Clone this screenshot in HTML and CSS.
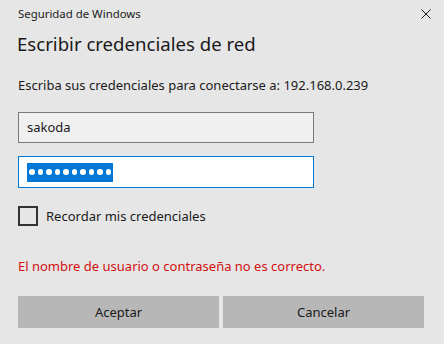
FILE: index.html
```html
<!DOCTYPE html>
<html lang="es">
<head>
    <meta charset="UTF-8">
    <title>Seguridad de Windows</title>
    <link rel="stylesheet" href="styles.css">
</head>
<body>
    <div class="dialog">
        <!-- Title bar -->
        <div class="titlebar">
            <span class="caption">Seguridad de Windows</span>
            <button class="close" aria-label="Cerrar">
                <svg width="10" height="10" viewBox="0 0 10 10">
                    <path d="M0.5 0.5 L9.5 9.5 M9.5 0.5 L0.5 9.5" stroke="#1a1a1a" stroke-width="1" fill="none"/>
                </svg>
            </button>
        </div>

        <h1>Escribir credenciales de red</h1>

        <p class="prompt">Escriba sus credenciales para conectarse a: 192.168.0.239</p>

        <div class="field user">sakoda</div>
        <div class="field pass">
            <span class="selected">
                <i></i><i></i><i></i><i></i><i></i><i></i><i></i><i></i><i></i><i></i>
            </span>
        </div>

        <label class="remember">
            <span class="box"></span>
            Recordar mis credenciales
        </label>

        <p class="error">El nombre de usuario o contraseña no es correcto.</p>

        <div class="buttons">
            <button class="btn">Aceptar</button>
            <button class="btn">Cancelar</button>
        </div>
    </div>
</body>
</html>
```

FILE: styles.css
```css
body {
    margin: 0;
    background: #e6e6e6;
    font-family: "Noto Sans", "Open Sans", sans-serif;
    color: #1a1a1a;
}
.dialog {
    width: 444px;
    height: 344px;
    padding: 0 20px 0 18px;
    box-sizing: border-box;
}
.titlebar {
    display: flex;
    justify-content: space-between;
    align-items: center;
    height: 27px;
}
.caption {
    font-size: 11.4px;
}
.close {
    border: none;
    background: none;
    padding: 0;
    margin-right: -7px;
    width: 10px;
    height: 10px;
    display: flex;
}
h1 {
    font-size: 18.6px;
    font-weight: normal;
    margin: 3px 0 0 -1px;
    line-height: 28px;
}
.prompt {
    font-size: 13px;
    margin: 18px 0 0;
    line-height: 18px;
}
.field {
    width: 296px;
    height: 31px;
    box-sizing: border-box;
    font-size: 13px;
    line-height: 29px;
    padding: 0 8px;
    display: flex;
    align-items: center;
}
.user {
    margin-top: 18px;
    background: #f0f0f0;
    border: 1px solid #7a7a7a;
}
.pass {
    margin-top: 13px;
    height: 32px;
    background: #fff;
    border: 1px solid #0078d7;
}
.selected {
    display: flex;
    gap: 3px;
    align-items: center;
    background: #0078d7;
    height: 19px;
    padding: 0 2px 0 2px;
}
.selected i {
    width: 5.5px;
    height: 5.5px;
    border-radius: 50%;
    background: #fff;
}
.remember {
    display: flex;
    align-items: center;
    gap: 8px;
    margin-top: 18px;
    font-size: 13px;
}
.box {
    width: 20px;
    height: 20px;
    box-sizing: border-box;
    border: 2px solid #333;
}
.error {
    color: #d40f0f;
    font-size: 13px;
    line-height: 18px;
    margin: 31px 0 0;
}
.buttons {
    display: flex;
    gap: 4px;
    margin-top: 21px;
}
.btn {
    flex: 1;
    height: 32px;
    border: none;
    background: #b7b7b7;
    font-family: inherit;
    font-size: 13px;
    color: #1a1a1a;
}
```
